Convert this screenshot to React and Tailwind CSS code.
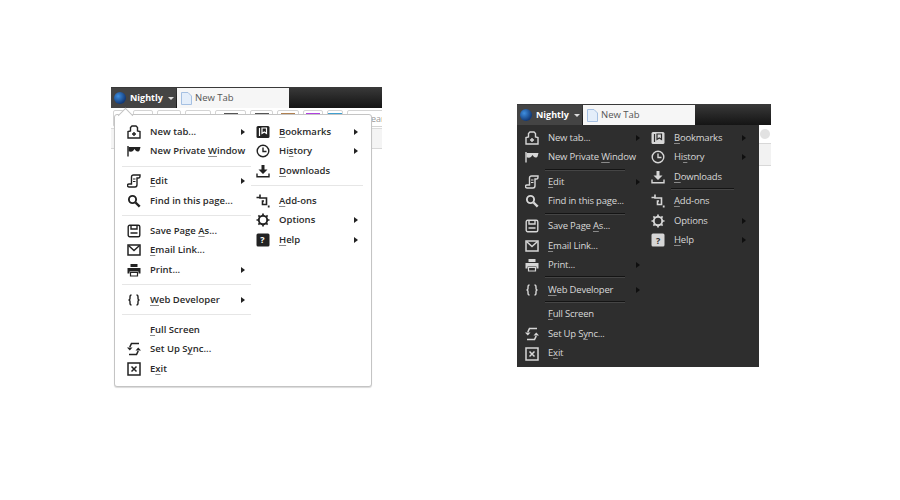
import React from "react";

const font = { fontFamily: '"Open Sans", sans-serif' };

function Svg({ children, className = "" }) {
  return (
    <svg width="14" height="14" viewBox="0 0 14 14" fill="none" stroke="currentColor" strokeWidth="1.4" className={className}>
      {children}
    </svg>
  );
}

const icons = {
  newtab: (
    <Svg>
      <path d="M1 13V6.500L3.500 6V2.500L5 1h4l1.500 1.500V6L13 6.500V13Z" />
      <path d="M7 7v4M5 9h4" />
    </Svg>
  ),
  mask: (
    <Svg>
      <path d="M1 2V12.500" />
      <path d="M1.500 3h12l-.8 3c-.5 1.800-2.700 2-3.900.8L7.500 5 6.200 6.800C5 8 3 7.800 1.500 7.300Z" fill="currentColor" stroke="none" />
    </Svg>
  ),
  edit: (
    <Svg>
      <path d="M4.500 10V3c0-1.200.8-2 2-2H13v1c0 1-.5 2-1.500 2H10v6.500c0 1.500-1 2.500-2 2.500H2c-1 0-1.500-.8-1.500-1.500S1 10 2 10Z" />
      <path d="M6 5h2.500M6 7.500h2.500" strokeWidth="1" />
    </Svg>
  ),
  search: (
    <Svg>
      <circle cx="5.500" cy="5.500" r="3.600" strokeWidth="1.900" />
      <path d="M8.500 8.500L12.700 12.700" strokeWidth="2.400" />
    </Svg>
  ),
  save: (
    <Svg>
      <rect x="1.200" y="1.200" width="11.600" height="11.600" rx="1.500" />
      <path d="M4 1.500v3.500h6V1.500M3.500 9h7" />
    </Svg>
  ),
  mail: (
    <Svg>
      <rect x="1" y="2" width="12" height="10" strokeWidth="1.500" />
      <path d="M1.500 2.500L7 7.500l5.500-5" strokeWidth="1.500" />
    </Svg>
  ),
  print: (
    <Svg>
      <path d="M3.500 4V1h7v3ZM0.500 5h13v5.500h-2V8.500h-9v2h-2Z" fill="currentColor" stroke="none" />
      <path d="M3.500 9.500h7V13h-7Z" strokeWidth="1.200" />
    </Svg>
  ),
  dev: (
    <Svg>
      <path d="M4.500 2c-1.500 0-1.500 1-1.500 2v1.500C3 6.500 2.500 7 1.500 7c1 0 1.500.5 1.500 1.500V10c0 1 0 2 1.500 2M9.500 2c1.500 0 1.500 1 1.500 2v1.500c0 1 .5 1.500 1.500 1.500-1 0-1.500.5-1.500 1.500V10c0 1 0 2-1.500 2" />
    </Svg>
  ),
  sync: (
    <Svg>
      <path d="M12 1.500H4.500L2.800 5" strokeWidth="1.600" />
      <path d="M0 5.500H5.500L2.800 8.500Z" fill="currentColor" stroke="none" />
      <path d="M2 12.500H9.500L11.200 9" strokeWidth="1.600" />
      <path d="M8.500 8.500H14L11.200 5.500Z" fill="currentColor" stroke="none" />
    </Svg>
  ),
  exit: (
    <Svg>
      <rect x="1" y="1" width="12" height="12" strokeWidth="1.500" />
      <path d="M4.500 4.500l5 5M9.500 4.500l-5 5" strokeWidth="1.500" />
    </Svg>
  ),
  bookmarks: (
    <Svg>
      <rect x="0.500" y="1" width="13" height="12" rx="1.500" fill="currentColor" stroke="none" />
      <path d="M3.500 3v8M6 3h4.500v5.500L8.250 7 6 8.500Z" stroke="var(--cut)" strokeWidth="1.200" />
    </Svg>
  ),
  history: (
    <Svg>
      <circle cx="7" cy="7" r="5.800" />
      <path d="M7 3.500V7.500H10.500" />
    </Svg>
  ),
  downloads: (
    <Svg>
      <path d="M5.500 1h3v4.500h3L7 10 2.500 5.500h3Z" fill="currentColor" stroke="none" />
      <path d="M1 9.500V12.800H13V9.500" />
    </Svg>
  ),
  addons: (
    <Svg>
      <path d="M0.500 3.500H4M4 0.500V4H10.500V10.500H6.500V7H8" strokeWidth="1.600" />
      <path d="M12.700 11.500v2" strokeWidth="1.800" />
    </Svg>
  ),
  options: (
    <Svg>
      <circle cx="7" cy="7" r="4.200" strokeWidth="1.900" />
      <path d="M7 0.500v2M7 11.500v2M0.500 7h2M11.500 7h2M2.400 2.400l1.400 1.400M10.200 10.200l1.400 1.400M2.400 11.600l1.400-1.400M10.200 3.800l1.400-1.400" strokeWidth="1.700" />
    </Svg>
  ),
  help: (
    <svg width="14" height="14" viewBox="0 0 14 14">
      <rect x="0.500" y="0.500" width="13" height="13" rx="1.500" fill="currentColor" />
    </svg>
  ),
};

function Label({ text, u }) {
  if (u == null) return <span>{text}</span>;
  return (
    <span>
      {text.slice(0, u)}
      <span className="underline decoration-[#8a8a8a] underline-offset-2">{text[u]}</span>
      {text.slice(u + 1)}
    </span>
  );
}

function Row({ icon, text, u, arrow, dark, w }) {
  return (
    <div className="flex h-[19.500px] items-center">
      <div className={`flex shrink-0 justify-center ${dark ? "w-[18px] text-[#d6d6d6] [--cut:#2e2e2e]" : "w-[23px] text-[#222222] [--cut:#ffffff]"}`}>
        {icon === "help" ? (
          <span className="relative flex h-[14px] w-[14px]">
            {icons.help}
            <span className={`absolute inset-0 flex items-center justify-center text-[9px] font-bold ${dark ? "text-[#2e2e2e]" : "text-white"}`}>?</span>
          </span>
        ) : (
          icons[icon]
        )}
      </div>
      <div className={`${dark ? "pl-[7px]" : "pl-[5px]"} ${w} flex items-center justify-between whitespace-nowrap`}>
        <Label text={text} u={u} />
        {arrow && <span className={`h-0 w-0 border-y-[3.500px] border-l-[4px] border-y-transparent ${dark ? "border-l-[#0f0f0f]" : "border-l-[#222222]"}`} />}
      </div>
    </div>
  );
}

const leftCol = [
  [{ icon: "newtab", text: "New tab...", arrow: true }, { icon: "mask", text: "New Private Window", u: 12 }],
  [{ icon: "edit", text: "Edit", u: 0, arrow: true }, { icon: "search", text: "Find in this page..." }],
  [{ icon: "save", text: "Save Page As...", u: 10 }, { icon: "mail", text: "Email Link...", u: 0 }, { icon: "print", text: "Print...", arrow: true }],
  [{ icon: "dev", text: "Web Developer", u: 0, arrow: true }],
  [{ text: "Full Screen", u: 0 }, { icon: "sync", text: "Set Up Sync...", u: 8 }, { icon: "exit", text: "Exit", u: 1 }],
];

const rightCol = [
  [{ icon: "bookmarks", text: "Bookmarks", u: 0, arrow: true }, { icon: "history", text: "History", u: 2, arrow: true }, { icon: "downloads", text: "Downloads", u: 0 }],
  [{ icon: "addons", text: "Add-ons", u: 0 }, { icon: "options", text: "Options", arrow: true }, { icon: "help", text: "Help", u: 0, arrow: true }],
];

function Column({ groups, dark, w, sep }) {
  return (
    <div className="flex flex-col">
      {groups.map((rows, i) => (
        <div key={i}>
          {i > 0 && <div className={sep} />}
          {rows.map((r) => (
            <Row key={r.text} {...r} dark={dark} w={w} />
          ))}
        </div>
      ))}
    </div>
  );
}

function TitleBar() {
  return (
    <div className="flex h-[21px] items-end bg-gradient-to-b from-[#3a3a3a] to-[#151515]">
      <div className="flex h-[20px] w-[65px] items-center bg-[#444444] pl-[3px] text-[9px] font-bold text-white">
        <span className="h-[12px] w-[12px] shrink-0 rounded-full bg-[radial-gradient(circle_at_35%_35%,#3f8fe0,#123a78_70%)]" />
        <span className="ml-[4px]">Nightly</span>
        <span className="ml-[5px] h-0 w-0 border-x-[3px] border-t-[3px] border-x-transparent border-t-[#dddddd]" />
      </div>
      <div className="ml-[1px] flex h-[20px] w-[112px] items-center bg-[#f6f6f6] pl-[4px] text-[9.500px] text-[#555555]">
        <svg width="11" height="13" viewBox="0 0 11 13" className="shrink-0">
          <path d="M.5.500H7L10.500 4V12.500H.5Z" fill="#e4eefa" stroke="#a5c0e2" />
        </svg>
        <span className="ml-[3px]">New Tab</span>
      </div>
    </div>
  );
}

function ToolButton({ w, color }) {
  return (
    <div className={`flex h-[17px] shrink-0 justify-center rounded-[2px] border border-[#d4d4d4] pt-[2px] ${w}`}>
      {color && <div className={`h-[3px] w-[14px] ${color}`} />}
    </div>
  );
}

export default function App() {
  return (
    <div className="h-[500px] w-[900px] overflow-hidden bg-white" style={font}>
      <div className="flex items-start">
        {/* light theme */}
        <div className="relative ml-[111px] mt-[87px] h-[300px] w-[271px]">
          <TitleBar />
          <div className="flex h-[21px] gap-[4px] overflow-hidden border-b border-[#dcdcdc] pl-[2px] pt-[2px]">
            <ToolButton w="w-[16px]" />
            <ToolButton w="w-[20px]" />
            <ToolButton w="w-[24px]" />
            <ToolButton w="w-[26px]" />
            <ToolButton w="w-[31px]" color="bg-[#555555]" />
            <ToolButton w="w-[23px]" color="bg-[#555555]" />
            <ToolButton w="w-[22px]" color="bg-[#b08050]" />
            <ToolButton w="w-[20px]" color="bg-[#b040e0]" />
            <ToolButton w="w-[16px]" color="bg-[#40a0d0]" />
            <div className="h-[17px] w-[60px] shrink-0 rounded-[2px] border border-[#d4d4d4] pl-[18px] text-[9px] leading-[15px] text-[#999999]">Search</div>
          </div>
          <div className="h-[20px] border-b border-[#d8d8d8] bg-[#f4f4f4]" />
          {/* menu sits over the toolbar */}
          <div className="absolute left-[3px] top-[27px] flex h-[273px] w-[258px] rounded-[3px] border border-[#c4c4c4] bg-white pl-[7px] pt-[7px] text-[9.500px] font-semibold text-[#2a2a2a] shadow-[0_1px_1px_rgba(0,0,0,0.15)]">
            <span className="absolute -top-[5px] left-[5px] h-[11px] w-[11px] rotate-45 border-l border-t border-[#c4c4c4] bg-white" />
            <Column groups={leftCol} w="w-[100px]" sep="my-[4.750px] h-px w-[129px] bg-[#e6e6e6]" />
            <Column groups={rightCol} w="w-[84px]" sep="my-[4.750px] h-px w-[112px] bg-[#e6e6e6]" />
          </div>
        </div>

        {/* dark theme */}
        <div className="relative ml-[135px] mt-[104px] h-[264px] w-[254px]">
          <TitleBar />
          <div className="flex">
            <div className="flex h-[242px] w-[242px] shrink-0 bg-[#2e2e2e] pl-[6px] pt-[3px] text-[9.500px] tracking-[-0.2px] text-[#d8d8d8]">
              <Column groups={leftCol} dark w="w-[99px]" sep="my-[1.600px] ml-[22px] h-[2px] w-[80px] border-t border-b border-t-[#141414] border-b-[#454545]" />
              <div className="ml-[9px]">
                <Column groups={rightCol} dark w="w-[79px]" sep="my-[1.600px] ml-[22px] h-[2px] w-[63px] border-t border-b border-t-[#141414] border-b-[#454545]" />
              </div>
            </div>
            <div className="flex-1">
              <div className="flex h-[19px] items-center border-b border-[#d8d8d8] pl-[1px]">
                <span className="h-[10px] w-[10px] rounded-full bg-[#e2e2e2]" />
              </div>
              <div className="h-[22px] border-b border-[#d8d8d8] bg-[#f2f2f2]" />
            </div>
          </div>
        </div>
      </div>
    </div>
  );
}
